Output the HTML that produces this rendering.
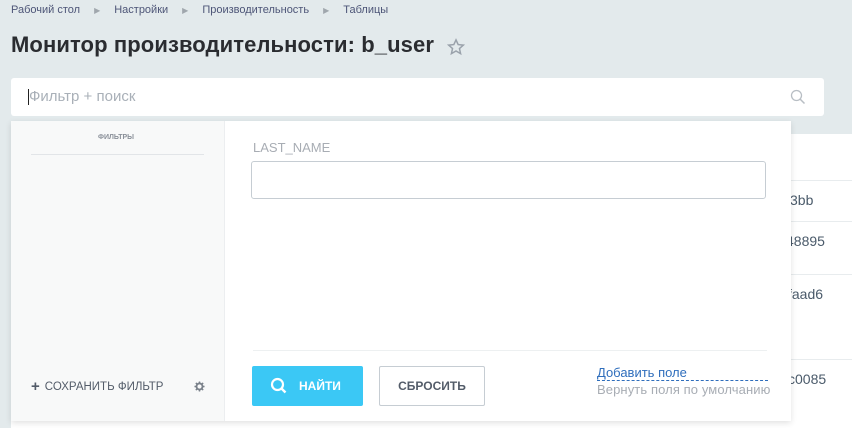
<!DOCTYPE html>
<html><head><meta charset="utf-8"><style>
*{margin:0;padding:0;box-sizing:border-box}
body{width:852px;height:428px;overflow:hidden;background:#e3eaec;font-family:"Liberation Sans",sans-serif;position:relative}
.a{position:absolute}
</style></head><body>
<div class="a" style="left:11px;top:4px;font-size:11px;color:#4d5577;white-space:nowrap">Рабочий стол<span style="color:#a0a7ad;font-size:8px;margin:0 14px 0 14px">▶</span>Настройки<span style="color:#a0a7ad;font-size:8px;margin:0 14px">▶</span>Производительность<span style="color:#a0a7ad;font-size:8px;margin:0 14px">▶</span>Таблицы</div>
<div class="a" style="left:11px;top:32px;font-size:22px;font-weight:bold;color:#2a2c30;letter-spacing:0.1px">Монитор производительности: b_user</div>
<svg class="a" style="left:447px;top:38px" width="18" height="18" viewBox="0 0 24 24"><path d="M12 2.5l2.9 6.3 6.8.7-5.1 4.6 1.5 6.7L12 17.3l-6.1 3.5 1.5-6.7L2.3 9.5l6.8-.7z" fill="none" stroke="#9aa2ab" stroke-width="2"/></svg>
<div class="a" style="left:11px;top:78px;width:813px;height:38px;background:#fff;border-radius:3px"></div>
<div class="a" style="left:28px;top:89px;width:1px;height:16px;background:#222"></div>
<div class="a" style="left:29px;top:88px;font-size:15px;color:#a9b0b8">Фильтр + поиск</div>
<svg class="a" style="left:790px;top:89px" width="16" height="16" viewBox="0 0 16 16"><circle cx="6.5" cy="6.5" r="5" fill="none" stroke="#b8bec4" stroke-width="1.3"/><path d="M10 10l4.5 4.5" stroke="#b8bec4" stroke-width="1.5"/></svg>
<div class="a" style="left:11px;top:134px;width:841px;height:294px;background:#fff"></div>
<div class="a" style="left:780px;top:180px;width:72px;height:1px;background:#e8ecee"></div>
<div class="a" style="left:780px;top:221px;width:72px;height:1px;background:#e8ecee"></div>
<div class="a" style="left:780px;top:274px;width:72px;height:1px;background:#e8ecee"></div>
<div class="a" style="left:780px;top:359px;width:72px;height:1px;background:#e8ecee"></div>
<div class="a" style="left:790px;top:192px;font-size:14px;color:#4a5a6a">3bb</div>
<div class="a" style="left:786px;top:233px;font-size:14px;color:#4a5a6a">48895</div>
<div class="a" style="left:788px;top:286px;font-size:14px;color:#4a5a6a">faad6</div>
<div class="a" style="left:788px;top:371px;font-size:14px;color:#4a5a6a">c0085</div>
<div class="a" style="left:11px;top:121px;width:780px;height:300px;background:#fff;box-shadow:0 2px 6px rgba(0,0,0,.12)"></div>
<div class="a" style="left:11px;top:121px;width:214px;height:300px;background:#f8f9f9;border-right:1px solid #eceef0"></div>
<div class="a" style="left:98px;top:134px;font-size:7px;font-weight:bold;color:#8a9099">ФИЛЬТРЫ</div>
<div class="a" style="left:31px;top:154px;width:173px;height:1px;background:#e2e5e8"></div>
<div class="a" style="left:31px;top:378px;font-size:11.5px;color:#535c69;white-space:nowrap"><span style="font-size:15px;font-weight:bold;margin-right:5px;vertical-align:-1px">+</span>СОХРАНИТЬ ФИЛЬТР</div>
<svg class="a" style="left:194px;top:381px" width="11" height="11" viewBox="0 0 12 12"><circle cx="6" cy="6" r="3.3" fill="none" stroke="#7a818a" stroke-width="2"/><path d="M6 0.5v2M6 9.5v2M0.5 6h2M9.5 6h2M2 2l1.5 1.5M8.5 8.5L10 10M2 10l1.5-1.5M8.5 3.5L10 2" stroke="#7a818a" stroke-width="1.6"/></svg>
<div class="a" style="left:253px;top:140px;font-size:13px;color:#a8adb4">LAST_NAME</div>
<div class="a" style="left:251px;top:161px;width:515px;height:38px;border:1px solid #c6cdd3;border-radius:3px"></div>
<div class="a" style="left:253px;top:350px;width:514px;height:1px;background:#edf0f1"></div>
<div class="a" style="left:252px;top:366px;width:111px;height:40px;background:#3bc8f5;border-radius:2px;color:#fff;font-size:12px;font-weight:bold;line-height:40px;padding-left:47px">НАЙТИ</div>
<svg class="a" style="left:270px;top:377px" width="18" height="18" viewBox="0 0 18 18"><circle cx="7.5" cy="7.5" r="5.5" fill="none" stroke="#fff" stroke-width="2.2"/><path d="M11.5 11.5l4 4" stroke="#fff" stroke-width="2.4"/></svg>
<div class="a" style="left:379px;top:366px;width:106px;height:40px;border:1px solid #c6cdd3;border-radius:2px;color:#535c69;font-size:12px;font-weight:bold;line-height:38px;text-align:center">СБРОСИТЬ</div>
<div class="a" style="left:597px;top:365px;font-size:13px;color:#2f6ebc">Добавить поле</div>
<div class="a" style="left:597px;top:380px;width:171px;border-top:1px dashed #2f6ebc"></div>
<div class="a" style="left:597px;top:382px;font-size:13px;color:#a8adb4;white-space:nowrap;letter-spacing:0.1px">Вернуть поля по умолчанию</div>
</body></html>
